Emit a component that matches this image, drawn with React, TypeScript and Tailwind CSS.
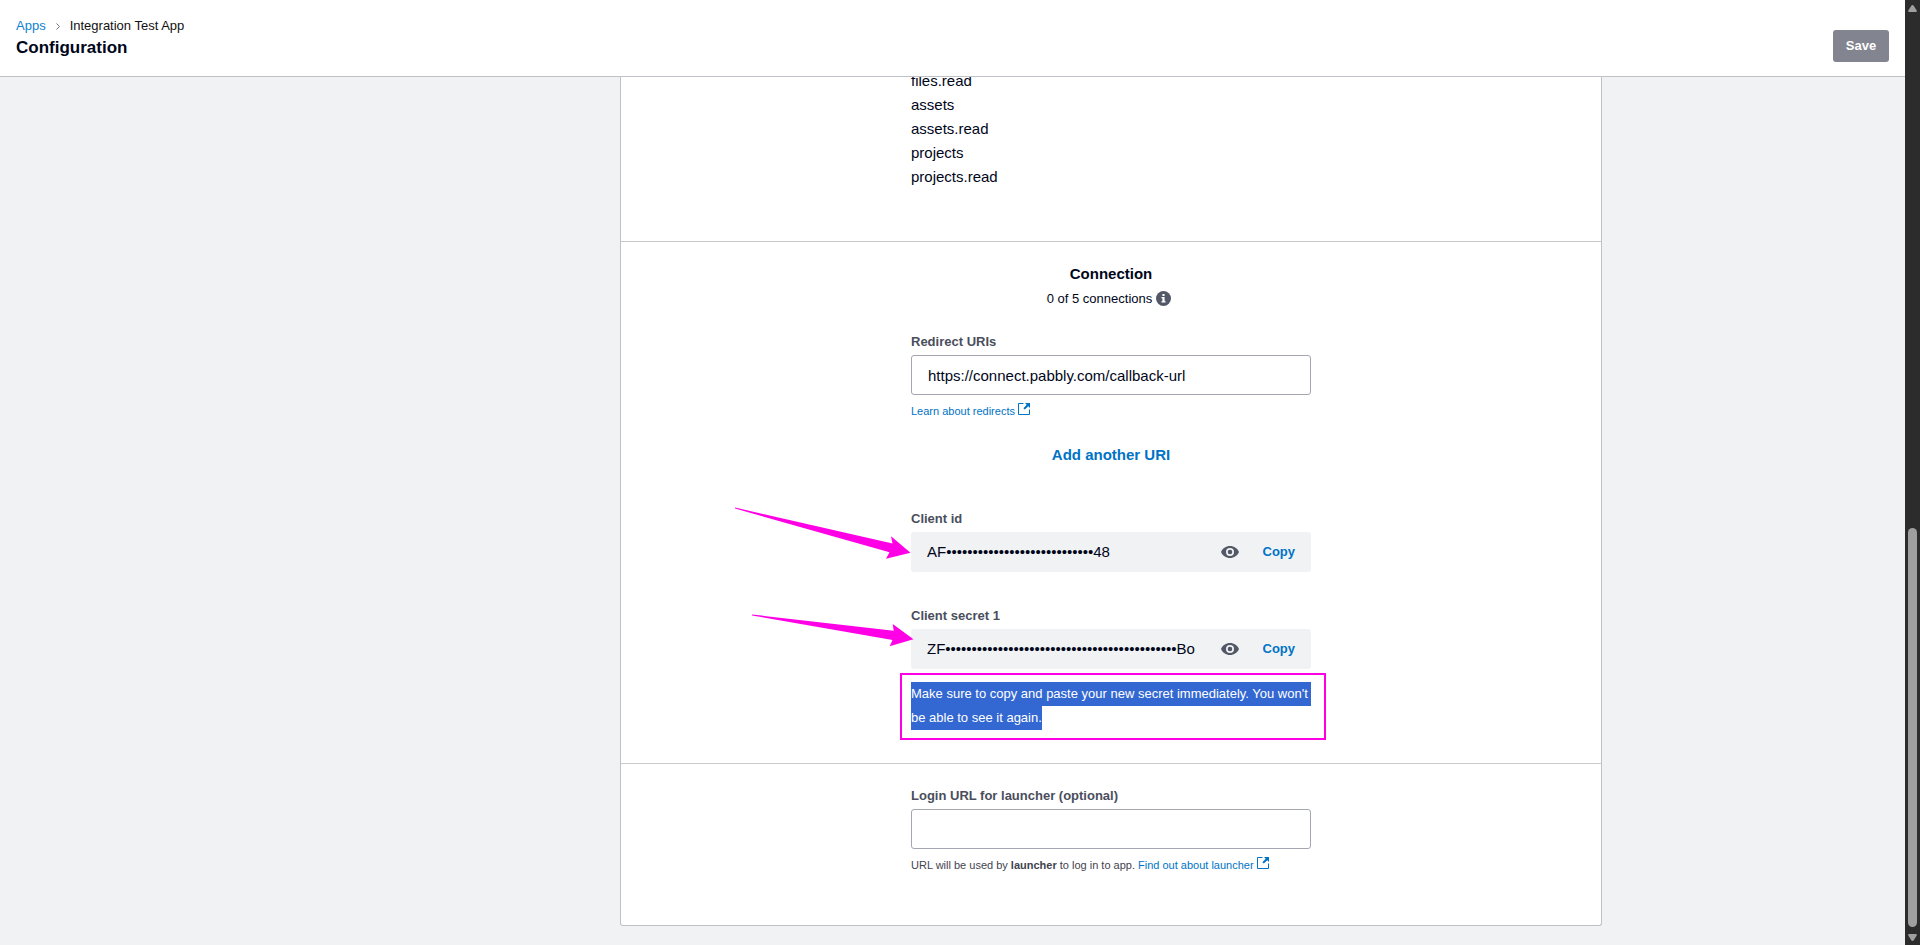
import { useState } from "react";

const scopes = ["files.read", "assets", "assets.read", "projects", "projects.read"];

function ExternalIcon() {
  return (
    <svg className="ml-[3px] h-3 w-3 shrink-0" viewBox="0 0 12 12" fill="none" aria-hidden="true">
      <path d="M5.5 .5H.5v11h11V6.500" stroke="currentColor" />
      <path d="M7 0H12v5L10.300 3.300 6.800 6.600 5.400 5.200 8.700 1.700z" fill="currentColor" />
    </svg>
  );
}

function InfoIcon() {
  return (
    <svg className="-mt-0.5 h-[15px] w-[15px]" viewBox="0 0 15 15" aria-hidden="true">
      <circle cx="7.5" cy="7.5" r="7.5" fill="#525866" />
      <path d="M6.400 3h2.200v2H6.400zM5.500 6h3.100v4.200h1V11.500H5.400V10.200h1V7.300h-.9z" fill="#fff" />
    </svg>
  );
}

function EyeIcon() {
  return (
    <svg className="h-3 w-[18px]" viewBox="0 0 18 12" aria-hidden="true">
      <path
        fillRule="evenodd"
        d="M9 0C4.900 0 1.500 2.500 0 6c1.500 3.500 4.900 6 9 6s7.500-2.500 9-6c-1.500-3.500-4.900-6-9-6zm0 10a4 4 0 1 1 0-8 4 4 0 0 1 0 8zm0-6.300a2.300 2.300 0 1 0 0 4.600 2.300 2.300 0 0 0 0-4.600z"
        fill="#525866"
      />
    </svg>
  );
}

function SecretField({ label, value, children }: { label: string; value: string; children?: React.ReactNode }) {
  const id = label.toLowerCase().replace(/ /g, "-");
  return (
    <div>
      <label htmlFor={id} className="mb-[3px] block text-[13px] leading-5 font-bold text-[#4a4e5c]">
        {label}
      </label>
      <div className="relative flex h-10 items-center rounded-[3px] bg-[#f1f2f4] px-4">
        <input id={id} readOnly value={value} className="min-w-0 flex-1 bg-transparent text-[15px] leading-6 outline-none" />
        <button type="button" aria-label={`Show ${label}`} className="ml-4 shrink-0">
          <EyeIcon />
        </button>
        <button type="button" className="ml-6 shrink-0 text-[13px] leading-5 font-bold text-[#0073c5]">
          Copy
        </button>
        {children}
      </div>
    </div>
  );
}

export default function App() {
  const [uri, setUri] = useState("https://connect.pabbly.com/callback-url");
  const [login, setLogin] = useState("");
  const labelClass = "mb-[3px] block text-[13px] leading-5 font-bold text-[#4a4e5c]";
  const inputClass =
    "block h-10 w-full rounded-[3px] border border-[#a4a6b2] bg-white px-4 text-[15px] leading-6 outline-none";

  return (
    <div className="flex h-screen bg-[#f1f2f4] font-['Liberation_Sans',Arial,sans-serif] text-[15px] leading-6 text-[#00061a]">
      <div className="flex min-w-0 flex-1 flex-col">
        <header className="flex shrink-0 items-end justify-between border-b border-[#bfc3c8] bg-white px-4 pt-4 pb-3.5">
          <div className="pb-0.5">
            <nav aria-label="Breadcrumb" className="flex items-center text-[13px] leading-5">
              <a href="#apps" className="text-[#0d82d4]">Apps</a>
              <svg className="mx-2.5 h-[7px] w-1" viewBox="0 0 4 7" fill="none" aria-hidden="true">
                <path d="M.5 .5l3 3-3 3" stroke="#6b7280" />
              </svg>
              <span className="text-[#111]">Integration Test App</span>
            </nav>
            <h1 className="text-[17px] leading-6 font-bold">Configuration</h1>
          </div>
          <button type="button" className="h-8 w-14 rounded-[3px] bg-[#828590] text-[13px] leading-5 font-bold text-white">
            Save
          </button>
        </header>

        <main className="min-h-0 flex-1 overflow-hidden pl-[317px]">
          <div className="mx-auto -mt-2 max-w-[982px] rounded-b-[3px] border-x border-b border-[#bfc1c9] bg-white">
            <section className="border-b border-[#c9cacd] pb-[52px]">
              <ul className="mx-auto max-w-[400px]">
                {scopes.map((s) => (
                  <li key={s}>{s}</li>
                ))}
              </ul>
            </section>

            <section className="border-b border-[#c9cacd] pt-5 pb-[33px]">
              <div className="mx-auto max-w-[400px]">
                <h2 className="text-center text-[15px] font-bold">Connection</h2>
                <p className="flex items-center justify-center gap-1 pr-1 text-[13px] leading-[26px]">
                  0 of 5 connections <InfoIcon />
                </p>
                <label htmlFor="redirect" className={`mt-5 ${labelClass}`}>Redirect URIs</label>
                <input id="redirect" value={uri} onChange={(e) => setUri(e.target.value)} className={inputClass} />
                <p className="mt-2 flex text-[11px] leading-4">
                  <a href="#redirects" className="flex items-start text-[#0073c5]">
                    Learn about redirects<ExternalIcon />
                  </a>
                </p>
                <div className="mt-6 mb-[42px] flex justify-center">
                  <button type="button" className="font-bold text-[#0073c5]">Add another URI</button>
                </div>

                <SecretField label="Client id" value={`AF${"•".repeat(28)}48`}>
                  <svg className="pointer-events-none absolute -top-[25px] -left-44 h-14 w-[178px]" viewBox="0 0 178 56" aria-hidden="true">
                    <path d="M0 .5L157.500 36.500 156 29.300 175.500 45.700 151 51.700 154.500 45.300 0 1.500z" fill="#ff00e6" />
                  </svg>
                </SecretField>
                <div className="h-[34px]" />
                <SecretField label="Client secret 1" value={`ZF${"•".repeat(44)}Bo`}>
                  <svg className="pointer-events-none absolute -top-[15px] -left-[159px] h-[34px] w-[162px]" viewBox="0 0 162 34" aria-hidden="true">
                    <path d="M0 .5L141.700 16.700 140.700 10 161.500 25.300 137.700 32.300 140.500 26 0 1.500z" fill="#ff00e6" />
                  </svg>
                </SecretField>
                <div className="relative mt-[13px] text-[13px] text-white">
                  <span className="block w-max bg-[#3367d1] whitespace-pre">{"Make sure to copy and paste your new secret immediately. You won't "}</span>
                  <span className="block w-max bg-[#3367d1]">be able to see it again.</span>
                  <span className="pointer-events-none absolute -top-[9px] -right-[15px] -bottom-[10px] -left-[11px] border-2 border-[#ff00e6]" />
                </div>
              </div>
            </section>

            <section className="pt-[22px] pb-[52px]">
              <div className="mx-auto max-w-[400px]">
                <label htmlFor="login" className={labelClass}>Login URL for launcher (optional)</label>
                <input id="login" value={login} onChange={(e) => setLogin(e.target.value)} className={inputClass} />
                <p className="mt-2 flex text-[11px] leading-4 text-[#3f4350]">
                  <span className="mr-[3px]">
                    URL will be used by <strong>launcher</strong> to log in to app.
                  </span>
                  <a href="#launcher" className="flex items-start text-[#0073c5]">
                    Find out about launcher<ExternalIcon />
                  </a>
                </p>
              </div>
            </section>
          </div>
        </main>
      </div>

      <div className="flex w-[15px] shrink-0 flex-col items-center bg-[#2c2c2c] pt-[5px] pb-1" aria-hidden="true">
        <svg className="h-[7px] w-[9px]" viewBox="0 0 9 7"><path d="M4.500 0Q5.300 0 5.900 1L8.700 5.500Q9.200 7 8 7H1Q-.2 7 .3 5.500L3.100 1Q3.700 0 4.500 0z" fill="#9f9f9f" /></svg>
        <div className="flex-1" />
        <div className="h-[399px] w-[9px] rounded-full bg-[#9f9f9f]" />
        <svg className="mt-[7px] h-[7px] w-[9px]" viewBox="0 0 9 7"><path d="M4.500 7Q5.300 7 5.900 6L8.700 1.500Q9.200 0 8 0H1Q-.2 0 .3 1.500L3.100 6Q3.700 7 4.500 7z" fill="#9f9f9f" /></svg>
      </div>
    </div>
  );
}
